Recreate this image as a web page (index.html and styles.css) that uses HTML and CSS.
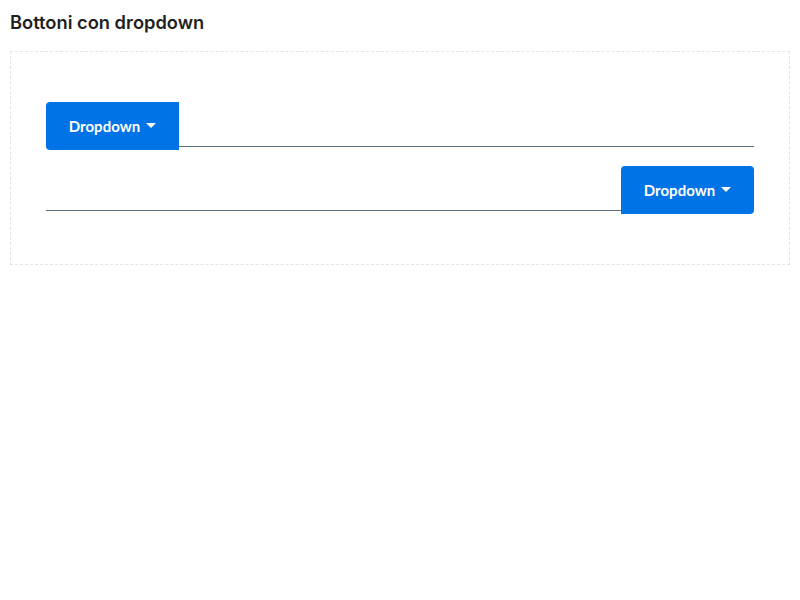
FILE: index.html
```html
<!DOCTYPE html>
<html lang="it">
<head>
<meta charset="utf-8">
<link rel="stylesheet" href="styles.css">
</head>
<body>
<h3 class="title">Bottoni con dropdown</h3>
<div class="box">
  <div class="row">
    <button class="btn btn-left">Dropdown <span class="caret"></span></button>
  </div>
  <div class="row row-right">
    <button class="btn btn-right">Dropdown <span class="caret"></span></button>
  </div>
</div>
</body>
</html>
```
FILE: styles.css
```css
body {
  margin: 0;
  padding: 10px;
  background: #fff;
  font-family: "Lato", "Liberation Sans", sans-serif;
}
.title {
  margin: 0 0 17px 0;
  font-family: "Inter", "Liberation Sans", sans-serif;
  font-size: 18.3px;
  font-weight: 600;
  line-height: 24px;
  color: #1f1f1f;
  letter-spacing: 0;
}
.box {
  border: 1px dashed #e3e4e6;
  padding: 50px 35px;
  display: flex;
  flex-direction: column;
  gap: 16px;
}
.row {
  position: relative;
  display: flex;
  height: 48px;
}
.row::after {
  content: "";
  position: absolute;
  left: 0;
  right: 0;
  bottom: 3px;
  height: 1px;
  background: #5b6f82;
}
.row-right {
  justify-content: flex-end;
}
.btn {
  position: relative;
  z-index: 1;
  width: 133px;
  height: 48px;
  border: 0;
  background: #0073e6;
  color: #fff;
  font-family: "Lato", "Liberation Sans", sans-serif;
  font-weight: 700;
  font-size: 15px;
  display: flex;
  align-items: center;
  justify-content: center;
  gap: 6px;
  padding: 0;
}
.btn-left {
  border-radius: 4px 0 0 4px;
}
.btn-right {
  border-radius: 4px 4px 4px 0;
}
.caret {
  width: 0;
  height: 0;
  border-left: 5px solid transparent;
  border-right: 5px solid transparent;
  border-top: 5px solid #fff;
  margin-top: -2px;
}
```
